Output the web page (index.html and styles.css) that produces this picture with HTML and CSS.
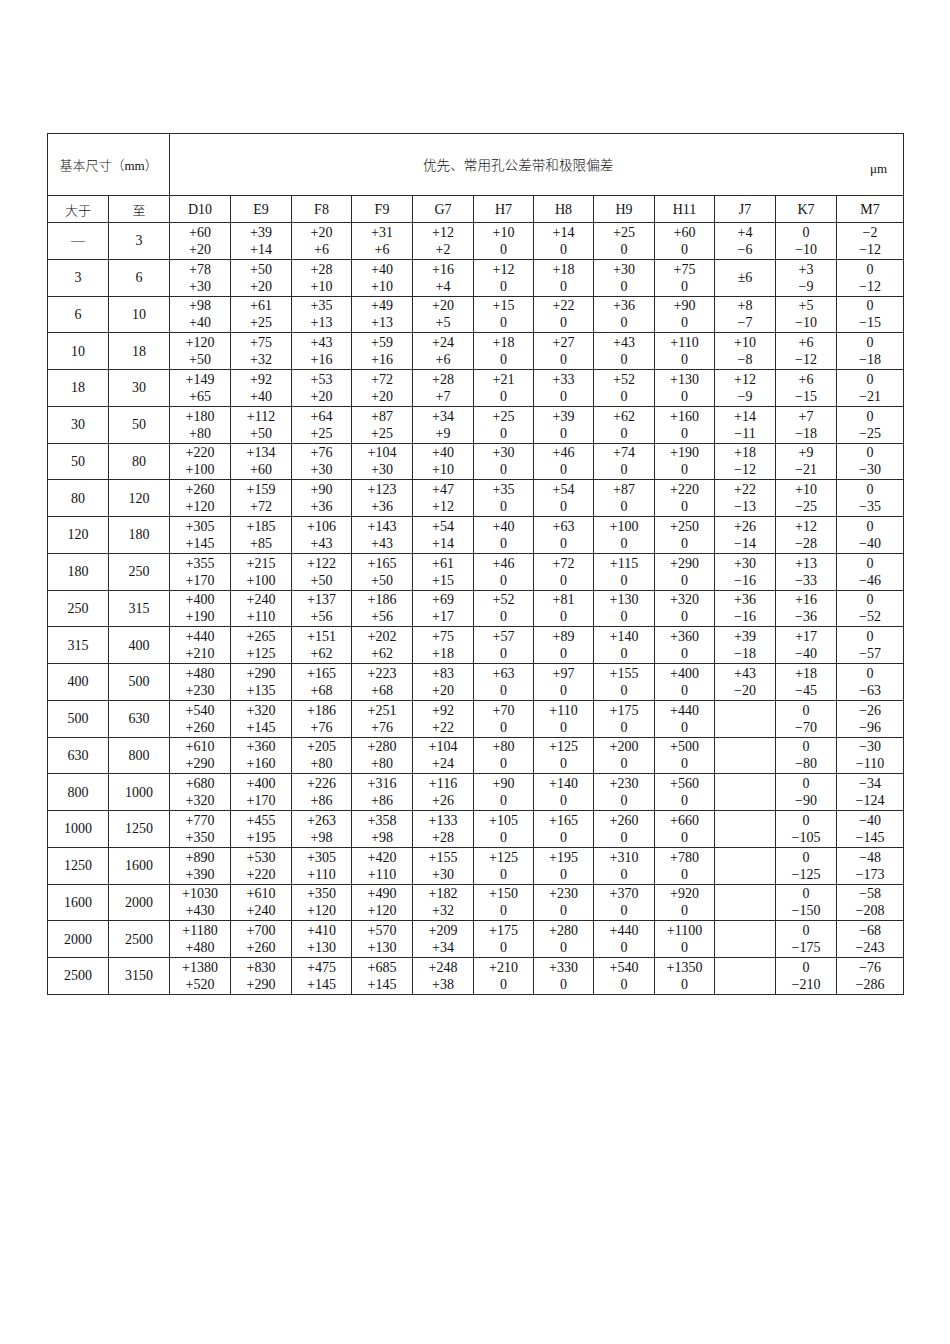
FILE: index.html
```html
<!DOCTYPE html>
<html lang="zh">
<head>
<meta charset="utf-8">
<title>优先、常用孔公差带和极限偏差</title>
<link rel="stylesheet" href="styles.css">
</head>
<body>
<div class="page">
<table class="tol">
<colgroup>
<col class="c61"><col class="c61"><col class="c61"><col class="c61"><col class="c60"><col class="c61"><col class="c61"><col class="c60"><col class="c60"><col class="c61"><col class="c60"><col class="c61"><col class="c61"><col class="c67">
</colgroup>
<tr class="h1">
<td colspan="2" class="cjk">基本尺寸（<span class="mm">mm</span>）</td>
<td colspan="12"><div class="title"><span class="cjk">优先、常用孔公差带和极限偏差</span><span class="unit">μm</span></div></td>
</tr>
<tr class="h2">
<td class="cjk">大于</td><td class="cjk">至</td><td>D10</td><td>E9</td><td>F8</td><td>F9</td><td>G7</td><td>H7</td><td>H8</td><td>H9</td><td>H11</td><td>J7</td><td>K7</td><td>M7</td>
</tr>
<tr><td>—</td><td>3</td><td>+60<br>+20</td><td>+39<br>+14</td><td>+20<br>+6</td><td>+31<br>+6</td><td>+12<br>+2</td><td>+10<br>0</td><td>+14<br>0</td><td>+25<br>0</td><td>+60<br>0</td><td>+4<br>−6</td><td>0<br>−10</td><td>−2<br>−12</td></tr>
<tr><td>3</td><td>6</td><td>+78<br>+30</td><td>+50<br>+20</td><td>+28<br>+10</td><td>+40<br>+10</td><td>+16<br>+4</td><td>+12<br>0</td><td>+18<br>0</td><td>+30<br>0</td><td>+75<br>0</td><td>±6</td><td>+3<br>−9</td><td>0<br>−12</td></tr>
<tr><td>6</td><td>10</td><td>+98<br>+40</td><td>+61<br>+25</td><td>+35<br>+13</td><td>+49<br>+13</td><td>+20<br>+5</td><td>+15<br>0</td><td>+22<br>0</td><td>+36<br>0</td><td>+90<br>0</td><td>+8<br>−7</td><td>+5<br>−10</td><td>0<br>−15</td></tr>
<tr><td>10</td><td>18</td><td>+120<br>+50</td><td>+75<br>+32</td><td>+43<br>+16</td><td>+59<br>+16</td><td>+24<br>+6</td><td>+18<br>0</td><td>+27<br>0</td><td>+43<br>0</td><td>+110<br>0</td><td>+10<br>−8</td><td>+6<br>−12</td><td>0<br>−18</td></tr>
<tr><td>18</td><td>30</td><td>+149<br>+65</td><td>+92<br>+40</td><td>+53<br>+20</td><td>+72<br>+20</td><td>+28<br>+7</td><td>+21<br>0</td><td>+33<br>0</td><td>+52<br>0</td><td>+130<br>0</td><td>+12<br>−9</td><td>+6<br>−15</td><td>0<br>−21</td></tr>
<tr><td>30</td><td>50</td><td>+180<br>+80</td><td>+112<br>+50</td><td>+64<br>+25</td><td>+87<br>+25</td><td>+34<br>+9</td><td>+25<br>0</td><td>+39<br>0</td><td>+62<br>0</td><td>+160<br>0</td><td>+14<br>−11</td><td>+7<br>−18</td><td>0<br>−25</td></tr>
<tr><td>50</td><td>80</td><td>+220<br>+100</td><td>+134<br>+60</td><td>+76<br>+30</td><td>+104<br>+30</td><td>+40<br>+10</td><td>+30<br>0</td><td>+46<br>0</td><td>+74<br>0</td><td>+190<br>0</td><td>+18<br>−12</td><td>+9<br>−21</td><td>0<br>−30</td></tr>
<tr><td>80</td><td>120</td><td>+260<br>+120</td><td>+159<br>+72</td><td>+90<br>+36</td><td>+123<br>+36</td><td>+47<br>+12</td><td>+35<br>0</td><td>+54<br>0</td><td>+87<br>0</td><td>+220<br>0</td><td>+22<br>−13</td><td>+10<br>−25</td><td>0<br>−35</td></tr>
<tr><td>120</td><td>180</td><td>+305<br>+145</td><td>+185<br>+85</td><td>+106<br>+43</td><td>+143<br>+43</td><td>+54<br>+14</td><td>+40<br>0</td><td>+63<br>0</td><td>+100<br>0</td><td>+250<br>0</td><td>+26<br>−14</td><td>+12<br>−28</td><td>0<br>−40</td></tr>
<tr><td>180</td><td>250</td><td>+355<br>+170</td><td>+215<br>+100</td><td>+122<br>+50</td><td>+165<br>+50</td><td>+61<br>+15</td><td>+46<br>0</td><td>+72<br>0</td><td>+115<br>0</td><td>+290<br>0</td><td>+30<br>−16</td><td>+13<br>−33</td><td>0<br>−46</td></tr>
<tr><td>250</td><td>315</td><td>+400<br>+190</td><td>+240<br>+110</td><td>+137<br>+56</td><td>+186<br>+56</td><td>+69<br>+17</td><td>+52<br>0</td><td>+81<br>0</td><td>+130<br>0</td><td>+320<br>0</td><td>+36<br>−16</td><td>+16<br>−36</td><td>0<br>−52</td></tr>
<tr><td>315</td><td>400</td><td>+440<br>+210</td><td>+265<br>+125</td><td>+151<br>+62</td><td>+202<br>+62</td><td>+75<br>+18</td><td>+57<br>0</td><td>+89<br>0</td><td>+140<br>0</td><td>+360<br>0</td><td>+39<br>−18</td><td>+17<br>−40</td><td>0<br>−57</td></tr>
<tr><td>400</td><td>500</td><td>+480<br>+230</td><td>+290<br>+135</td><td>+165<br>+68</td><td>+223<br>+68</td><td>+83<br>+20</td><td>+63<br>0</td><td>+97<br>0</td><td>+155<br>0</td><td>+400<br>0</td><td>+43<br>−20</td><td>+18<br>−45</td><td>0<br>−63</td></tr>
<tr><td>500</td><td>630</td><td>+540<br>+260</td><td>+320<br>+145</td><td>+186<br>+76</td><td>+251<br>+76</td><td>+92<br>+22</td><td>+70<br>0</td><td>+110<br>0</td><td>+175<br>0</td><td>+440<br>0</td><td></td><td>0<br>−70</td><td>−26<br>−96</td></tr>
<tr><td>630</td><td>800</td><td>+610<br>+290</td><td>+360<br>+160</td><td>+205<br>+80</td><td>+280<br>+80</td><td>+104<br>+24</td><td>+80<br>0</td><td>+125<br>0</td><td>+200<br>0</td><td>+500<br>0</td><td></td><td>0<br>−80</td><td>−30<br>−110</td></tr>
<tr><td>800</td><td>1000</td><td>+680<br>+320</td><td>+400<br>+170</td><td>+226<br>+86</td><td>+316<br>+86</td><td>+116<br>+26</td><td>+90<br>0</td><td>+140<br>0</td><td>+230<br>0</td><td>+560<br>0</td><td></td><td>0<br>−90</td><td>−34<br>−124</td></tr>
<tr><td>1000</td><td>1250</td><td>+770<br>+350</td><td>+455<br>+195</td><td>+263<br>+98</td><td>+358<br>+98</td><td>+133<br>+28</td><td>+105<br>0</td><td>+165<br>0</td><td>+260<br>0</td><td>+660<br>0</td><td></td><td>0<br>−105</td><td>−40<br>−145</td></tr>
<tr><td>1250</td><td>1600</td><td>+890<br>+390</td><td>+530<br>+220</td><td>+305<br>+110</td><td>+420<br>+110</td><td>+155<br>+30</td><td>+125<br>0</td><td>+195<br>0</td><td>+310<br>0</td><td>+780<br>0</td><td></td><td>0<br>−125</td><td>−48<br>−173</td></tr>
<tr><td>1600</td><td>2000</td><td>+1030<br>+430</td><td>+610<br>+240</td><td>+350<br>+120</td><td>+490<br>+120</td><td>+182<br>+32</td><td>+150<br>0</td><td>+230<br>0</td><td>+370<br>0</td><td>+920<br>0</td><td></td><td>0<br>−150</td><td>−58<br>−208</td></tr>
<tr><td>2000</td><td>2500</td><td>+1180<br>+480</td><td>+700<br>+260</td><td>+410<br>+130</td><td>+570<br>+130</td><td>+209<br>+34</td><td>+175<br>0</td><td>+280<br>0</td><td>+440<br>0</td><td>+1100<br>0</td><td></td><td>0<br>−175</td><td>−68<br>−243</td></tr>
<tr><td>2500</td><td>3150</td><td>+1380<br>+520</td><td>+830<br>+290</td><td>+475<br>+145</td><td>+685<br>+145</td><td>+248<br>+38</td><td>+210<br>0</td><td>+330<br>0</td><td>+540<br>0</td><td>+1350<br>0</td><td></td><td>0<br>−210</td><td>−76<br>−286</td></tr>
</table>
</div>
</body>
</html>
```
FILE: styles.css
```css
html, body {
  margin: 0;
  padding: 0;
  background: #fff;
}
.page {
  padding: 133px 0 0 47px;
}
.tol {
  border-collapse: collapse;
  table-layout: fixed;
  width: 857px;
  font-family: "Liberation Serif", "Noto Sans CJK SC", serif;
  font-size: 14px;
  color: #111;
}
.c61 { width: 61px; }
.c60 { width: 60px; }
.c67 { width: 67px; }
.tol td {
  border: 1px solid #2a2a2a;
  padding: 0;
  text-align: center;
  vertical-align: middle;
  line-height: 17px;
  height: 35.75px;
  white-space: nowrap;
}
.tol .h1 td {
  height: 61px;
}
.tol .h2 td {
  height: 26px;
}
.cjk {
  font-family: "Noto Sans CJK SC", sans-serif;
  font-size: 13px;
  font-weight: 300;
}
.mm {
  font-family: "Liberation Serif", serif;
  font-size: 13px;
}
.title {
  display: flex;
  justify-content: space-between;
  align-items: center;
  padding: 0 16px 0 253px;
}
.title .cjk {
  font-size: 13.6px;
}
.unit {
  margin-top: 8px;
  font-size: 13px;
}
```
